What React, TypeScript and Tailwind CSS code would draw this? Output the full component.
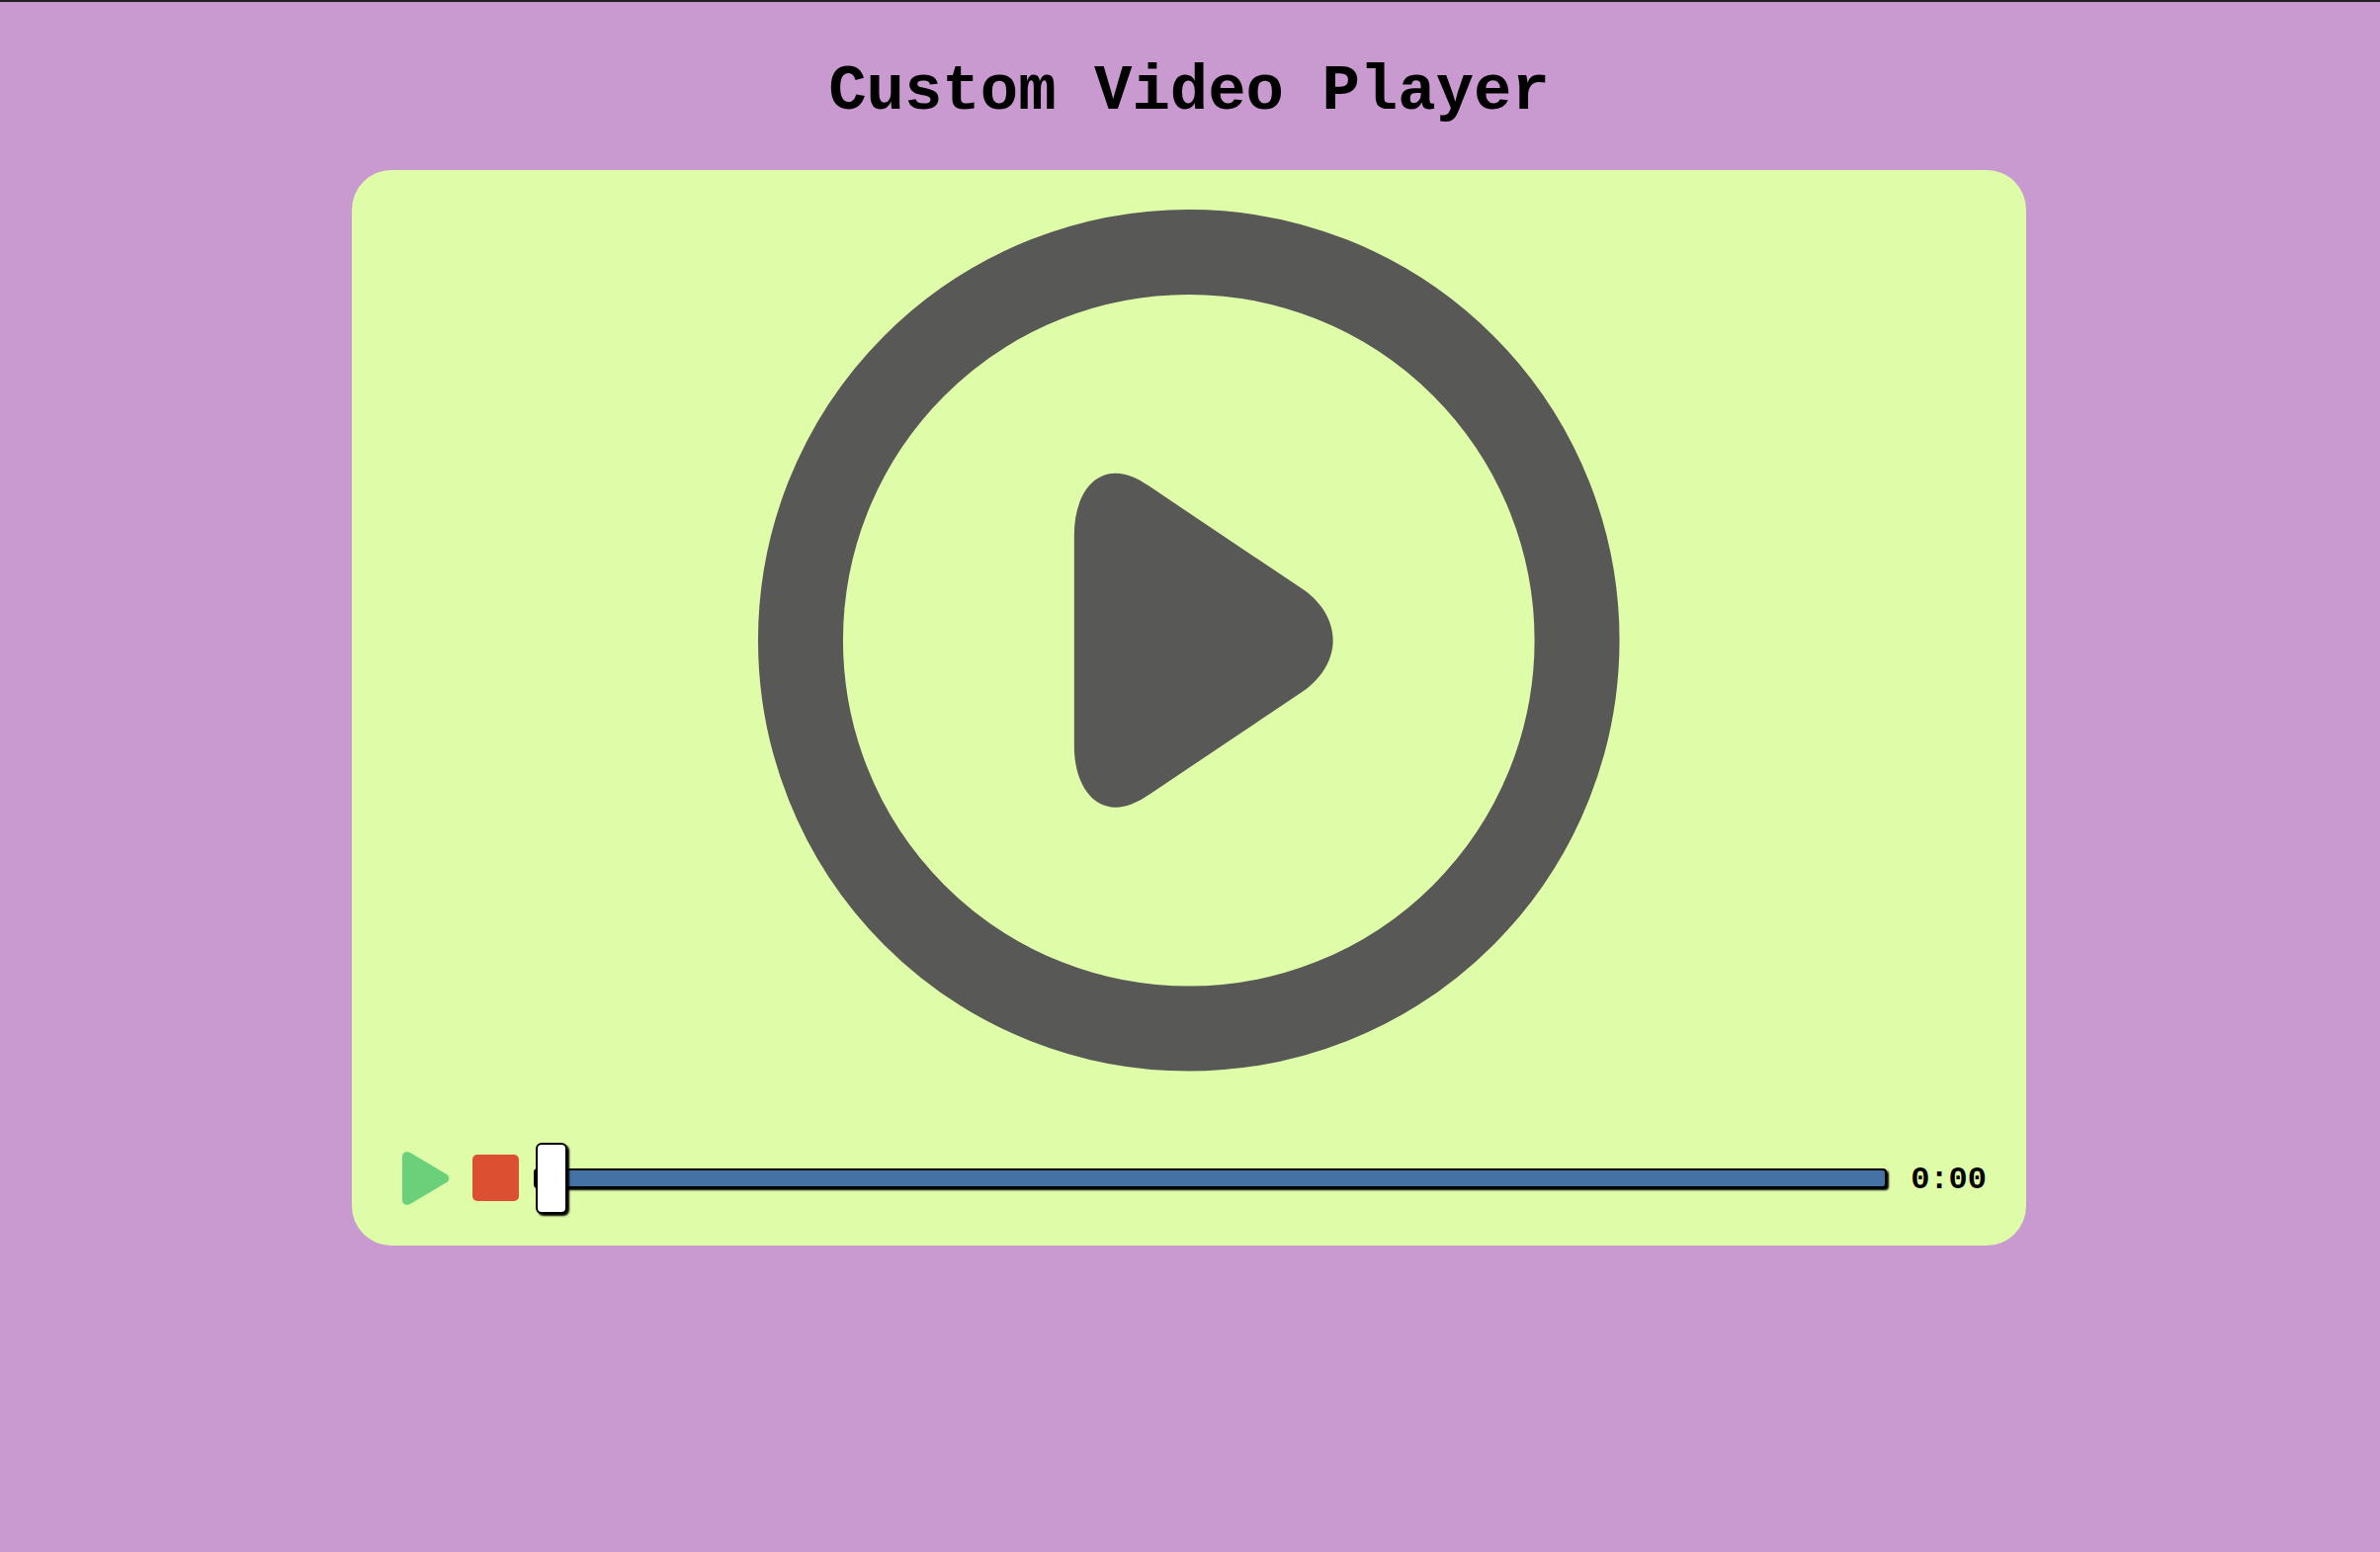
import { useState } from "react";

export default function App() {
  const [position, setPosition] = useState(0);
  return (
    <main className="flex min-h-screen flex-col items-center border-t-2 border-[#231f24] bg-[#c89ad0] pr-[42px] pb-10 pl-10 font-['Liberation_Mono',monospace] text-black">
      <h1 className="pt-[54px] pb-[42px] text-center text-[64px] leading-[74px] font-bold">Custom Video Player</h1>
      <section aria-label="Video player" className="flex w-full max-w-[1694px] flex-col gap-[72px] rounded-[40px] bg-[#dffda9] px-10 pt-10 pb-8">
        <svg viewBox="0 0 872 872" role="img" aria-label="Video poster" className="w-[54%] self-center">
          <circle cx="436" cy="436" r="393" fill="none" stroke="#585856" strokeWidth="86" />
          <path d="M320 329C320 294 336 267 362 267C373 267 384 272 396 280L551 384C569 396 582 415 582 436C582 457 569 476 551 488L396 592C384 600 373 605 362 605C336 605 320 578 320 543Z" fill="#585856" />
        </svg>
        <div className="flex items-center">
          <button type="button" aria-label="Play" className="flex h-[72px] w-[70px] items-center justify-center">
            <svg viewBox="0 0 48 54" className="h-[54px] w-12" fill="#6bd079" aria-hidden="true">
              <path d="M0 5C0 1 4-1 8 1L45 23C48 25 48 29 45 31L8 53C4 55 0 53 0 49Z" />
            </svg>
          </button>
          <button type="button" aria-label="Stop" className="flex h-[72px] w-[70px] items-center justify-center">
            <svg viewBox="0 0 47 47" className="size-[47px]" fill="#dc4f30" aria-hidden="true">
              <rect width="47" height="47" rx="5" />
            </svg>
          </button>
          <input
            type="range"
            aria-label="Progress"
            min="0"
            max="100"
            value={position}
            onChange={(event) => setPosition(Number(event.target.value))}
            className="ml-1 h-[72px] min-w-0 flex-1 appearance-none bg-transparent [&::-webkit-slider-runnable-track]:h-5 [&::-webkit-slider-runnable-track]:rounded-[4px] [&::-webkit-slider-runnable-track]:border-2 [&::-webkit-slider-runnable-track]:border-black [&::-webkit-slider-runnable-track]:bg-[#4472a4] [&::-webkit-slider-runnable-track]:shadow-[2px_2px_2px_#000] [&::-webkit-slider-thumb]:-mt-7 [&::-webkit-slider-thumb]:h-[72px] [&::-webkit-slider-thumb]:w-8 [&::-webkit-slider-thumb]:appearance-none [&::-webkit-slider-thumb]:rounded-[6px] [&::-webkit-slider-thumb]:border-2 [&::-webkit-slider-thumb]:border-black [&::-webkit-slider-thumb]:bg-white [&::-webkit-slider-thumb]:shadow-[2px_2px_2px_#000]"
          />
          <time className="pt-1 pl-6 text-[32px] leading-10 font-bold">0:00</time>
        </div>
      </section>
    </main>
  );
}
